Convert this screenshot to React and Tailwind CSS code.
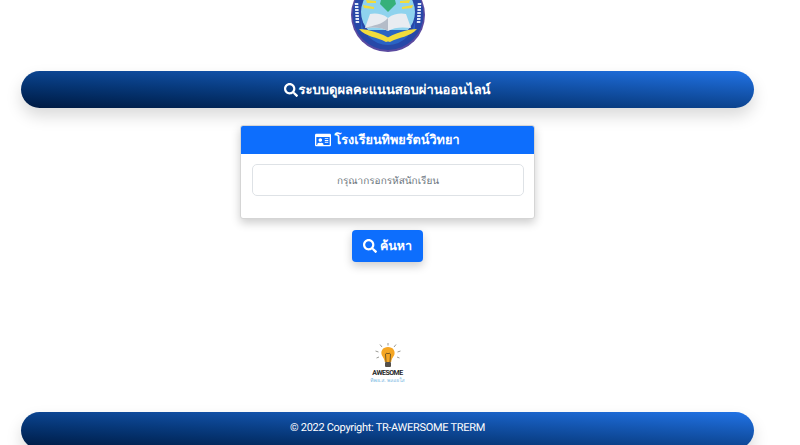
import React from "react";
import { FaSearch, FaRegIdCard } from "react-icons/fa";

const thaiFont = "font-['Noto_Sans','Open_Sans','DejaVu_Sans',sans-serif]";

function SchoolLogo() {
  return (
    <svg width="76" height="52" viewBox="0 0 76 52" className="block shrink-0">
      <circle cx="38" cy="15" r="37" fill="#5a4aa0" />
      <circle cx="38" cy="14.500" r="35.500" fill="#2748a8" />
      <circle cx="38" cy="12" r="27" fill="#8fd3ee" />
      <path d="M11 18 A27 27 0 0 0 65 18 L65 30 L11 30 Z" fill="#2a63c4" />
      {/* rays */}
      <path d="M16 0 L26 1 L26 3 L17 3 Z M13 5 L24 7 L24 9 L14 8 Z M60 0 L50 1 L50 3 L59 3 Z M63 5 L52 7 L52 9 L62 8 Z" fill="#f2dc3c" />
      {/* gem / tree */}
      <path d="M38 12 L30 4 L31 0 L45 0 L46 4 Z" fill="#35b07a" />
      {/* book */}
      <path d="M38 18 C32 13 24 13 20 14 L15 28 C23 27 32 27 38 31 C44 27 53 27 61 28 L56 14 C52 13 44 13 38 18 Z" fill="#e8ecf1" />
      <path d="M38 18 L38 31 C32 27 23 27 15 28 C24 25 32 25 38 18 Z" fill="#b4bcc8" />
      {/* ribbon */}
      <path d="M9 29 C18 29 32 33 42 40 L36 42 C27 37 16 37 9 29 Z" fill="#f2dc3c" />
      <path d="M67 29 C58 29 44 33 34 40 L40 42 C49 37 60 37 67 29 Z" fill="#f2dc3c" />
      {/* side lettering marks */}
      <path d="M6.500 3 L7.500 24 M69.500 3 L68.500 24" stroke="#dfe8f6" strokeWidth="3.500" strokeDasharray="2 1" />
    </svg>
  );
}

function BulbLogo() {
  return (
    <div className="flex flex-col items-center">
      <svg width="26" height="25" viewBox="0 0 26 25" className="block">
        <path d="M13 4 C8 4 5.800 7.800 6.500 11 C7 13.500 9.300 15 9.800 19 L16.200 19 C16.700 15 19 13.500 19.500 11 C20.200 7.800 18 4 13 4 Z" fill="#f5a623" />
        <path d="M11 19 L10.500 11 L12 10 L13 11 L14 10 L15.500 11 L15 19" stroke="#7a5a20" strokeWidth="1" fill="none" />
        <rect x="10" y="19" width="6" height="5" rx="1" fill="#55504a" />
        <path d="M13 0 L13 2.500 M5 1.500 L7 4 M21 1.500 L19 4 M0.500 8 L3.500 9 M25.500 8 L22.500 9 M1.500 15 L4 14 M24.500 15 L22 14" stroke="#9a9a94" strokeWidth="1" />
      </svg>
      <span className="text-[7px] leading-[8px] font-bold tracking-[-0.5px] text-[#2a2a2a] font-['Roboto',sans-serif] mt-[1px]">AWESOME</span>
      <span className={`text-[5px] leading-[7px] mt-[1px] text-[#6fb4e0] ${thaiFont}`}>ทิพย.ส. พลอยใส</span>
    </div>
  );
}

export default function App() {
  return (
    <div className={`w-[775px] h-[445px] overflow-hidden bg-white px-[21px] flex flex-col items-center [text-rendering:geometricPrecision] ${thaiFont}`}>
      <SchoolLogo />

      <div className="mt-[19px] w-full h-[37px] shrink-0 rounded-[19px] bg-gradient-to-tr from-[#001a42] to-[#2173e6] shadow-[0_8px_16px_rgba(0,0,0,0.15)] flex items-center justify-center text-white text-[13px] font-semibold">
        <FaSearch className="w-[14px] h-[14px]" />
        <span>ระบบดูผลคะแนนสอบผ่านออนไลน์</span>
      </div>

      <div className="mt-[17px] w-[295px] h-[94px] shrink-0 border border-[#d5d5d5] rounded-[3px] bg-white shadow-[0_4px_10px_rgba(0,0,0,0.2)] overflow-hidden">
        <div className="h-[28px] bg-[#0d6efd] flex items-center justify-center gap-[3px] text-white text-[12.700px] font-semibold">
          <FaRegIdCard className="w-[16px] h-[16px]" />
          <span>โรงเรียนทิพยรัตน์วิทยา</span>
        </div>
        <div className="pl-[11px] pr-[10px] pt-[10px]">
          <div className="h-[32px] border border-[#dee2e6] rounded-[5px] flex items-center justify-center text-[10px] text-[#6c757d]">
            กรุณากรอกรหัสนักเรียน
          </div>
        </div>
      </div>

      <div className="mt-[11px] w-[71px] h-[32px] shrink-0 rounded-[4px] bg-[#0d6efd] shadow-[0_4px_10px_rgba(0,0,0,0.2)] flex items-center justify-center gap-[3px] text-white text-[12.500px] font-semibold">
        <FaSearch className="w-[14px] h-[14px]" />
        <span>ค้นหา</span>
      </div>

      <div className="mt-[81px] shrink-0">
        <BulbLogo />
      </div>

      <div className="mt-[27px] w-full h-[37px] shrink-0 rounded-[19px] bg-gradient-to-tr from-[#001a42] to-[#2173e6] shadow-[0_8px_16px_rgba(0,0,0,0.15)] flex items-center justify-center text-white text-[11px] tracking-[-0.3px] font-['Roboto',sans-serif] pb-[4px]">
        © 2022 Copyright: TR-AWERSOME TRERM
      </div>
    </div>
  );
}
